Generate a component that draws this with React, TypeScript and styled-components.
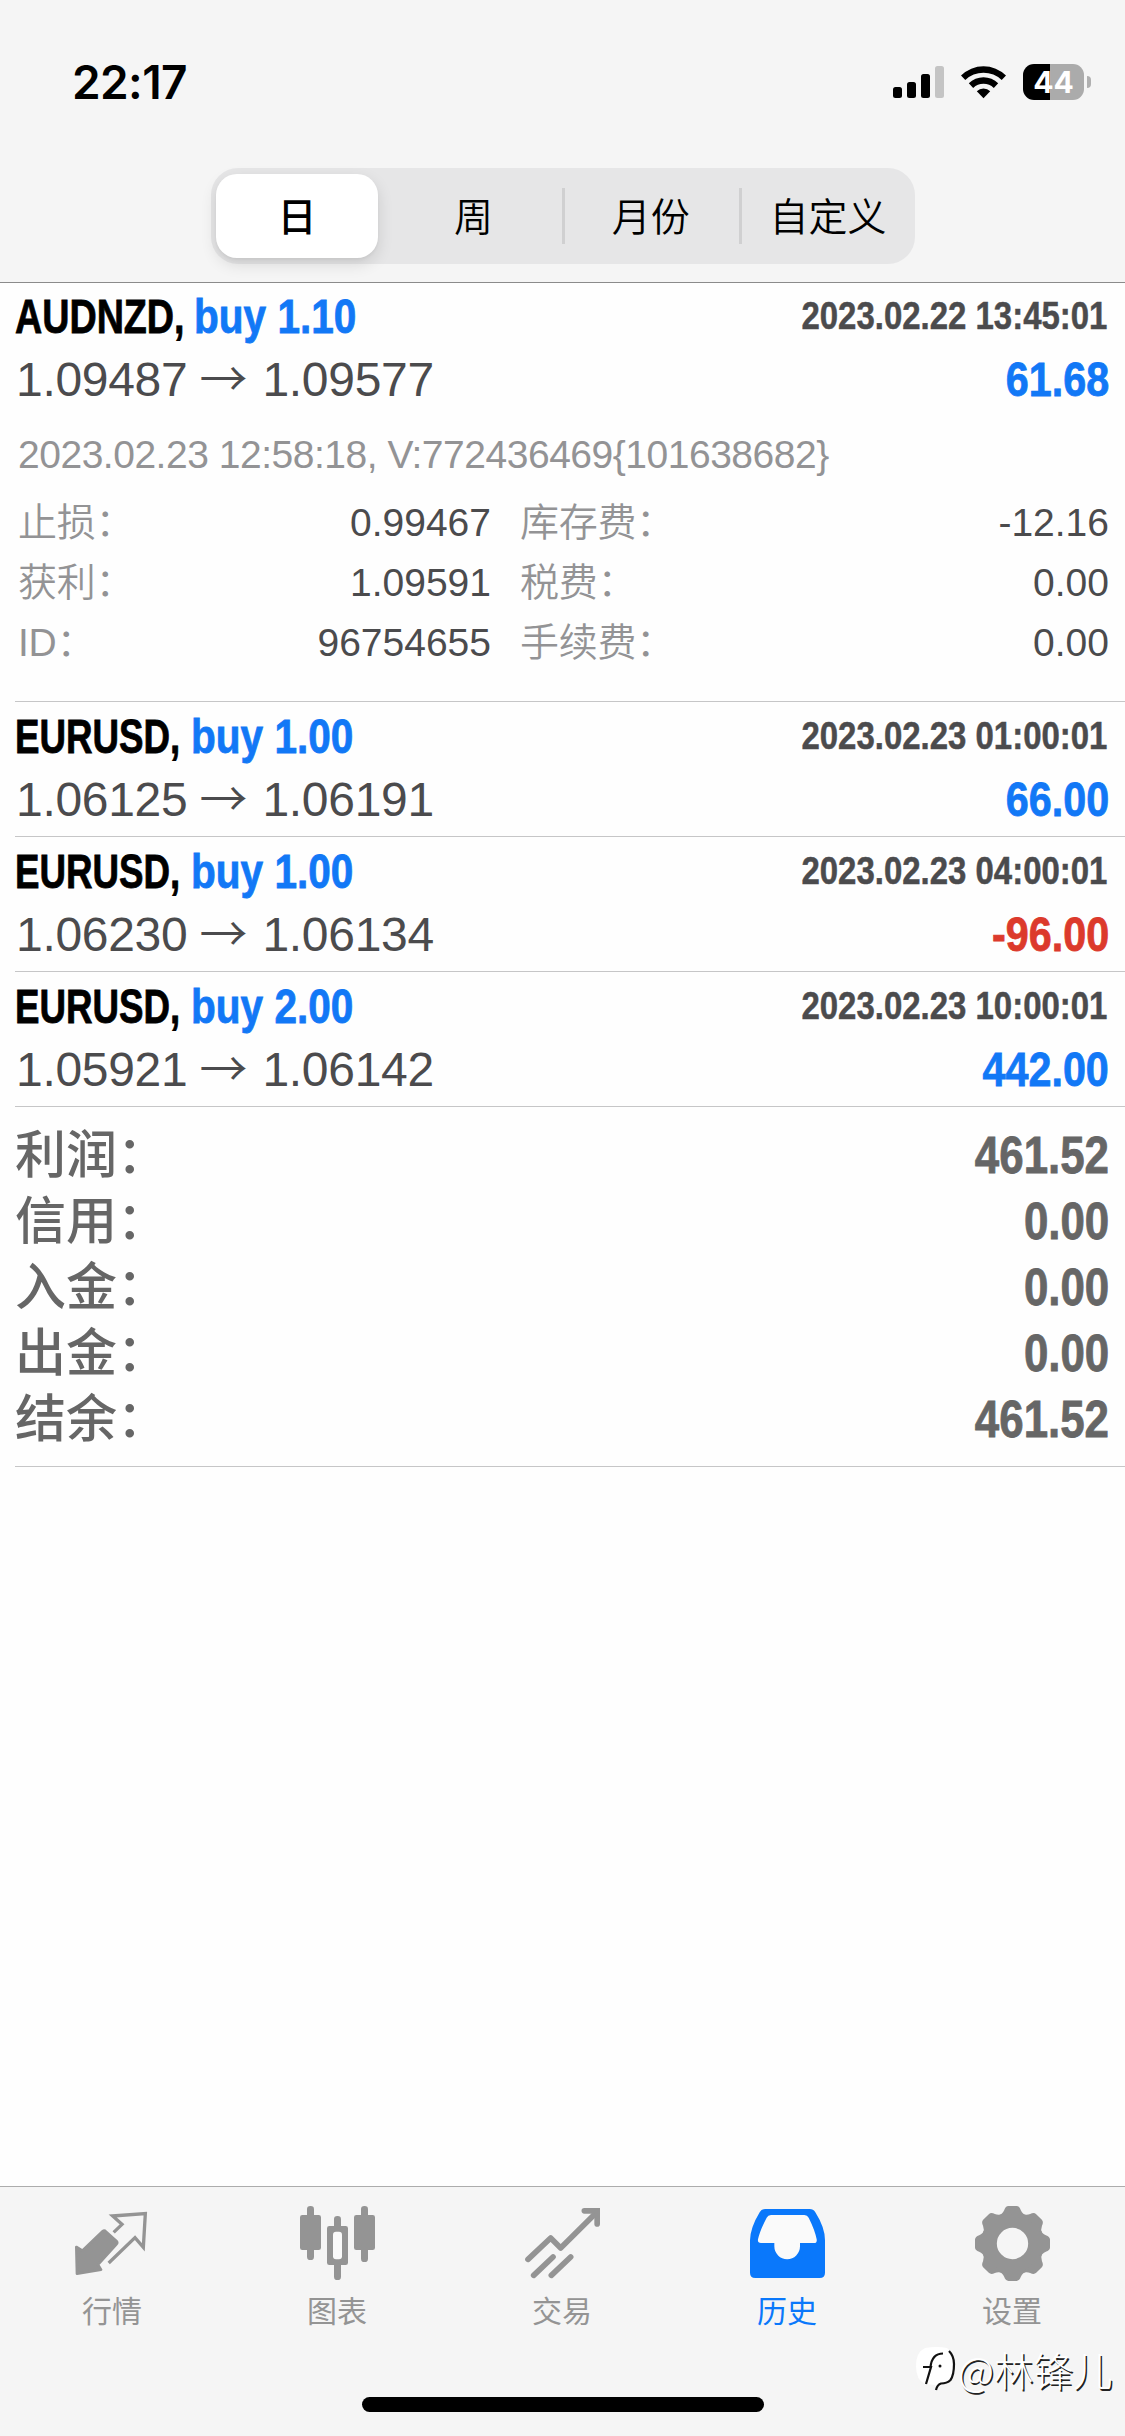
import React from "react";
import styled, { createGlobalStyle } from "styled-components";

const BLUE = "#1278f6";
const RED = "#dc3a2c";
const sans = `"Liberation Sans", "Noto Sans CJK SC", sans-serif`;
const cjk = `"Noto Sans CJK SC", sans-serif`;

const GlobalStyle = createGlobalStyle`
  * { box-sizing: border-box; }
  body { margin: 0; background: #fff; }
`;

const Screen = styled.div`
  position: relative;
  display: flex;
  flex-direction: column;
  width: 1125px;
  height: 2436px;
  overflow: hidden;
  background: #fefefe;
  font-family: ${sans};
  white-space: nowrap;
`;

const Header = styled.header`
  position: relative;
  z-index: 1;
  display: flex;
  flex-direction: column;
  align-items: center;
  height: 283px;
  margin-bottom: -1px;
  background: #f5f5f5;
  border-bottom: 1px solid #8b8b8b;
`;

const StatusBar = styled.div`
  display: flex;
  align-items: center;
  justify-content: space-between;
  width: 100%;
  height: 168px;
  padding: 0 34px 4px 72px;
`;

const Clock = styled.time`
  font: 600 46px/54px Inter, sans-serif;
  letter-spacing: -0.6px;
  color: #000;
`;

const StatusIcons = styled.div`
  display: flex;
  align-items: center;
  gap: 16px;
`;

const Segments = styled.nav`
  display: grid;
  grid-template-columns: 176.5px 177.5px 177px 173px;
  grid-template-rows: 96px;
  width: 704px;
  height: 96px;
  border-radius: 27px;
  background: #e6e6e7;
`;

const Segment = styled.button<{ $active?: boolean; $divider?: boolean }>`
  display: flex;
  align-items: center;
  justify-content: center;
  margin: ${(p) => (p.$active ? "6px 9px 6px 5.5px" : "20px 0")};
  padding: ${(p) => (p.$divider ? "0 1.5px 4px 0" : "0 0 4px")};
  border: 0;
  border-right: ${(p) => (p.$divider ? "3px solid #d0d0d1" : "0")};
  border-radius: ${(p) => (p.$active ? "21px" : "0")};
  background: ${(p) => (p.$active ? "#fff" : "transparent")};
  box-shadow: ${(p) => (p.$active ? "0 6px 16px rgba(0,0,0,.12), 0 2px 3px rgba(0,0,0,.04)" : "none")};
  font: ${(p) => (p.$active ? 500 : 350)} 39px/48px ${cjk};
  color: #000;
`;

const History = styled.main`
  flex: 1;
`;

const Deal = styled.article<{ $open?: boolean }>`
  height: ${(p) => (p.$open ? 420 : 135)}px;
  margin-left: 15px;
  padding: 4px 16px 0 0;
  border-bottom: 1px solid #c6c6c7;
`;

const DealLine = styled.div<{ $h: number }>`
  display: flex;
  align-items: center;
  justify-content: space-between;
  height: ${(p) => p.$h}px;
  line-height: ${(p) => p.$h}px;
`;

/* Bold Helvetica-style text squeezed horizontally into a condensed face. */
const Condensed = styled.span<{ $scale: number; $from?: "left" | "right" }>`
  display: block;
  font-weight: bold;
  transform: scaleX(${(p) => p.$scale});
  transform-origin: ${(p) => p.$from ?? "left"} center;
  -webkit-text-stroke: 0.8px currentColor;
`;

const Title = styled.h2`
  display: flex;
  margin: 2px 0 0;
  font-size: 48px;
  line-height: 60px;
  color: #000;
`;

const Symbol = styled(Condensed)<{ $width: number }>`
  width: ${(p) => p.$width}px;
`;

const Volume = styled(Condensed)`
  color: ${BLUE};
`;

const Closed = styled(Condensed)`
  padding-right: 2px;
  font-size: 39px;
  color: #4b4b4d;
  -webkit-text-stroke-width: 0.5px;
`;

const Prices = styled.span`
  display: flex;
  align-items: center;
  margin-left: 1px;
  font-size: 48px;
  letter-spacing: -0.3px;
  color: #4b4b4d;
`;

const Arrow = styled.span`
  width: 48px;
  height: 67px;
  margin: 0 15px 0 12px;
  padding-bottom: 8px;
  font: 350 48px/59px ${cjk};
`;

const Profit = styled(Condensed)<{ $negative?: boolean }>`
  font-size: 48px;
  color: ${(p) => (p.$negative ? RED : BLUE)};
`;

const Meta = styled.p`
  margin: 12px 0 8px 3px;
  font-size: 39px;
  line-height: 60px;
  letter-spacing: -0.48px;
  color: #939395;
`;

const Details = styled.dl`
  display: grid;
  grid-template-columns: 473px 589px;
  column-gap: 29px;
  margin: 0 0 0 3px;
`;

const Detail = styled.div`
  display: flex;
  justify-content: space-between;
  height: 60px;
  font-size: 39px;
  line-height: 60px;
`;

const Label = styled.dt`
  font-weight: 350;
  letter-spacing: -0.3px;
  color: #939395;
`;

const Value = styled.dd`
  margin: 0;
  color: #4b4b4d;
`;

const Summary = styled.dl`
  height: 360px;
  margin: 0 0 0 15px;
  padding: 16px 16px 0 0;
  border-bottom: 1px solid #c6c6c7;
`;

const SummaryRow = styled.div`
  display: flex;
  justify-content: space-between;
  height: 66px;
  font-size: 51px;
  line-height: 66px;
  color: #666;
`;

const SummaryLabel = styled.dt`
  font-weight: 500;
`;

const SummaryValue = styled.dd`
  margin: 0;
`;

const TabBar = styled.footer`
  display: grid;
  grid-template-columns: repeat(5, 225px);
  height: 250px;
  border-top: 1px solid #acacac;
  background: #f5f5f5;
`;

const Tab = styled.a<{ $active?: boolean }>`
  display: flex;
  flex-direction: column;
  align-items: center;
  gap: 6px;
  padding: 19px 1px 0 0;
  font: 400 30px/44px ${cjk};
  color: ${(p) => (p.$active ? "#0a78fb" : "#949494")};
`;

const HomeIndicator = styled.div`
  position: absolute;
  left: 362px;
  bottom: 24px;
  width: 402px;
  height: 15px;
  border-radius: 8px;
  background: #000;
`;

const Watermark = styled.div`
  position: absolute;
  left: 915px;
  top: 2342px;
  display: flex;
  align-items: center;
  gap: 1px;
  font: 300 39.5px/54px ${cjk};
  color: #fff;
  text-shadow: 1.5px 1.5px 0 #222;
`;

const Signal = () => (
  <svg width="52" height="36" viewBox="893 64 52 36">
    <rect x="893" y="87" width="9" height="11" rx="2.5" />
    <rect x="907" y="82" width="9" height="16" rx="2.5" />
    <rect x="921" y="74" width="9" height="24" rx="2.5" />
    <rect x="935" y="66" width="9" height="32" rx="2.5" fill="#c4c4c4" />
  </svg>
);

const Wifi = () => (
  <svg width="46" height="36" viewBox="960.5 64 46 36">
    <path d="M960.5 75.5a32 32 0 0 1 45 0l-4.3 4.6a26 26 0 0 0-36.400 0z" />
    <path d="M968.300 83.300a21 21 0 0 1 29.400 0l-4.400 4.600a15 15 0 0 0-20.600 0z" />
    <path d="M976.300 91.300a9.500 9.500 0 0 1 13.400 0l-6.700 6.900z" />
  </svg>
);

const BatteryRow = styled.div`
  display: flex;
  align-items: center;
  gap: 3px;
`;

const BatteryBody = styled.div`
  width: 61px;
  height: 36px;
  border-radius: 11px;
  background: linear-gradient(to right, #000 27px, #ababab 27px);
  font: 700 30px/36px Inter, sans-serif;
  text-align: center;
  color: #fff;
`;

const BatteryTip = styled.div`
  width: 4px;
  height: 12px;
  border-radius: 0 5px 5px 0;
  background: #b0b0b0;
`;

const TabSvg = ({ x, children }: { x: number; children: React.ReactNode }) => (
  <svg width="75" height="75" viewBox={`${x} 108 225 225`} fill="currentColor">
    {children}
  </svg>
);

const QuotesIcon = () => (
  <TabSvg x={225}>
    <path
      d="M229 231L247 242L308 184Q313 180 318 185L349 213Q354 218 349 223L294 284L303 299L231 311Z"
      stroke="currentColor"
      strokeWidth="8"
      strokeLinejoin="round"
    />
    <path d="M341 187L366 163L338 138L436 131L430 232L405 203L326 279" fill="none" stroke="currentColor" strokeWidth="10" />
  </TabSvg>
);

const ChartIcon = () => (
  <TabSvg x={897}>
    <rect x="918" y="108" width="21" height="162" rx="10" />
    <rect x="897" y="135" width="63" height="105" rx="7" />
    <rect x="1080" y="108" width="21" height="168" rx="10" />
    <rect x="1059" y="135" width="63" height="105" rx="7" />
    <rect x="999" y="138" width="21" height="40" rx="10" />
    <rect x="999" y="270" width="21" height="60" rx="10" />
    <rect x="978" y="168" width="63" height="117" rx="7" />
    <rect x="996" y="185" width="27" height="83" rx="9" fill="#fafafa" />
  </TabSvg>
);

const TradeIcon = () => (
  <TabSvg x={372}>
    <g fill="none" stroke="currentColor" strokeWidth="17" strokeLinecap="round">
      <path d="M381 268L449 204L479 234L584 130" strokeLinejoin="round" />
      <path d="M550 122.500H588.500V162" />
      <path d="M398 316L456 261" />
      <path d="M451 316L509 261" />
    </g>
  </TabSvg>
);

const HistoryIcon = () => (
  <TabSvg x={1047}>
    <path d="M1093 117H1226Q1237 117 1243 127Q1272 173 1272 211V308Q1272 324 1256 324H1063Q1047 324 1047 308V211Q1048 173 1076 127Q1082 117 1093 117Z" />
    <path
      fill="#fafafa"
      d="M1110 135H1210Q1219 135 1223 143Q1242 181 1247 208Q1249 219 1239 219H1197V229A38.500 38.500 0 0 1 1120 229V219H1080Q1069 219 1071 208Q1077 181 1097 143Q1101 135 1110 135Z"
    />
  </TabSvg>
);

const GearIcon = () => (
  <TabSvg x={372}>
    <g transform="translate(484.500 220.500)">
      <circle r="70" fill="none" stroke="currentColor" strokeWidth="46" />
      {[0, 45, 90, 135, 180, 225, 270, 315].map((a) => (
        <path
          key={a}
          transform={`rotate(${a})`}
          d="M-42 -84Q-30 -88 -25 -100Q-21 -112 -12 -112.500H12Q21 -112 25 -100Q30 -88 42 -84Z"
        />
      ))}
    </g>
  </TabSvg>
);

const WatermarkLogo = () => (
  <svg width="42" height="46" viewBox="0 0 42 46">
    <path d="M10 2Q22 0 32 2Q41 8 40 21Q40 31 35 35Q31 37.500 27 37.500L20.500 44V39L10 38Q1 34 1 20Q1 6 10 2Z" fill="#fff" />
    <path
      d="M34 5Q39 10 39 18Q39 29 35.500 34Q32 37.500 26 37.500Q22 39 21 44"
      fill="none"
      stroke="#111"
      strokeWidth="2.200"
    />
    <path d="M8 21H16L11 38M15.500 21Q17 7.500 28 7.500" fill="none" stroke="#111" strokeWidth="2.200" />
    <circle cx="25" cy="20" r="1.500" fill="#111" />
  </svg>
);

const deals = [
  { symbol: "AUDNZD", width: 179, scale: 0.785, side: "buy 1.10", closed: "2023.02.22 13:45:01", from: "1.09487", to: "1.09577", profit: "61.68", open: true },
  { symbol: "EURUSD", width: 176, scale: 0.765, side: "buy 1.00", closed: "2023.02.23 01:00:01", from: "1.06125", to: "1.06191", profit: "66.00" },
  { symbol: "EURUSD", width: 176, scale: 0.765, side: "buy 1.00", closed: "2023.02.23 04:00:01", from: "1.06230", to: "1.06134", profit: "-96.00" },
  { symbol: "EURUSD", width: 176, scale: 0.765, side: "buy 2.00", closed: "2023.02.23 10:00:01", from: "1.05921", to: "1.06142", profit: "442.00" },
];

const details = [
  ["止损：", "0.99467"],
  ["库存费：", "-12.16"],
  ["获利：", "1.09591"],
  ["税费：", "0.00"],
  ["ID：", "96754655"],
  ["手续费：", "0.00"],
];

const summary = [
  ["利润：", "461.52"],
  ["信用：", "0.00"],
  ["入金：", "0.00"],
  ["出金：", "0.00"],
  ["结余：", "461.52"],
];

const tabs = [
  { label: "行情", Icon: QuotesIcon },
  { label: "图表", Icon: ChartIcon },
  { label: "交易", Icon: TradeIcon },
  { label: "历史", Icon: HistoryIcon, active: true },
  { label: "设置", Icon: GearIcon },
];

export default function App() {
  return (
    <Screen>
      <GlobalStyle />
      <Header>
        <StatusBar>
          <Clock>22:17</Clock>
          <StatusIcons>
            <Signal />
            <Wifi />
            <BatteryRow>
              <BatteryBody>44</BatteryBody>
              <BatteryTip />
            </BatteryRow>
          </StatusIcons>
        </StatusBar>
        <Segments>
          <Segment $active>日</Segment>
          <Segment $divider>周</Segment>
          <Segment $divider>月份</Segment>
          <Segment>自定义</Segment>
        </Segments>
      </Header>
      <History>
        {deals.map((d) => (
          <Deal key={d.closed} $open={d.open}>
            <DealLine $h={60}>
              <Title>
                <Symbol $scale={d.scale} $width={d.width}>
                  {d.symbol},
                </Symbol>
                <Volume $scale={0.845}>{d.side}</Volume>
              </Title>
              <Closed $scale={0.845} $from="right">
                {d.closed}
              </Closed>
            </DealLine>
            <DealLine $h={67}>
              <Prices>
                {d.from}
                <Arrow>→</Arrow>
                {d.to}
              </Prices>
              <Profit $scale={0.86} $from="right" $negative={d.profit.startsWith("-")}>
                {d.profit}
              </Profit>
            </DealLine>
            {d.open && (
              <>
                <Meta>2023.02.23 12:58:18, V:772436469{"{101638682}"}</Meta>
                <Details>
                  {details.map(([label, value]) => (
                    <Detail key={label}>
                      <Label>{label}</Label>
                      <Value>{value}</Value>
                    </Detail>
                  ))}
                </Details>
              </>
            )}
          </Deal>
        ))}
        <Summary>
          {summary.map(([label, value]) => (
            <SummaryRow key={label}>
              <SummaryLabel>{label}</SummaryLabel>
              <SummaryValue>
                <Condensed $scale={0.86} $from="right">
                  {value}
                </Condensed>
              </SummaryValue>
            </SummaryRow>
          ))}
        </Summary>
      </History>
      <TabBar>
        {tabs.map(({ label, Icon, active }) => (
          <Tab key={label} $active={active}>
            <Icon />
            {label}
          </Tab>
        ))}
      </TabBar>
      <HomeIndicator />
      <Watermark>
        <WatermarkLogo />
        @林锋儿
      </Watermark>
    </Screen>
  );
}
